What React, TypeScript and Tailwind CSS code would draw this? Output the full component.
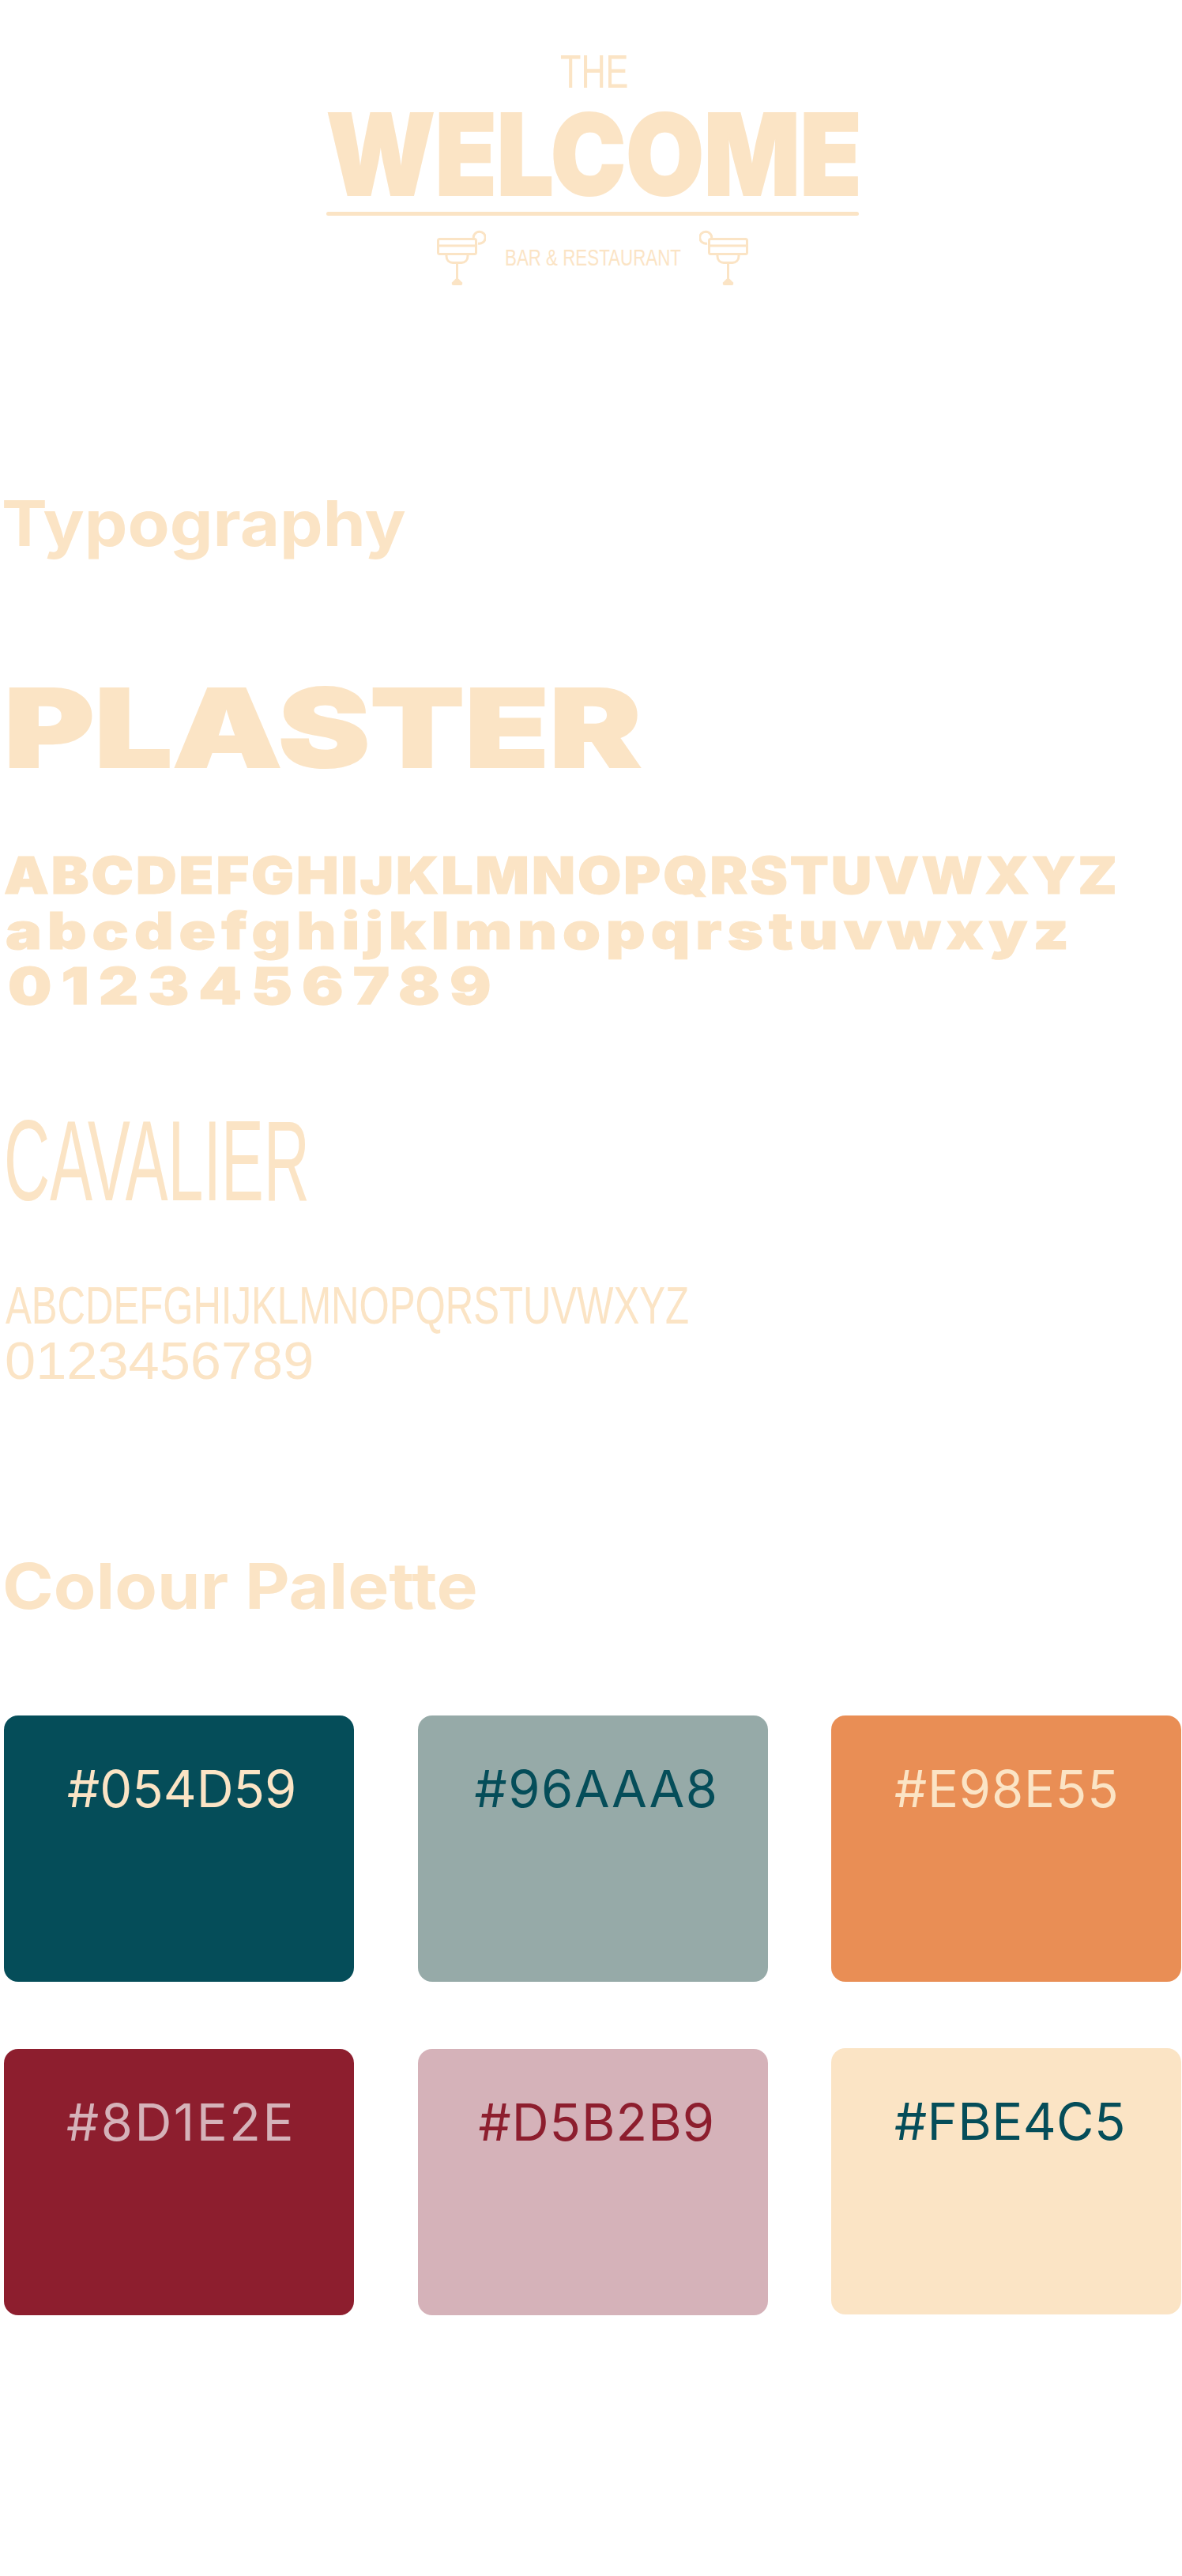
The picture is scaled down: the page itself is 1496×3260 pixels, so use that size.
const swatches = [
  { hex: "#054D59", box: "bg-[#054D59] text-[#FBE4C5] pl-[80px]", type: "tracking-[0px]" },
  { hex: "#96AAA8", box: "bg-[#96AAA8] text-[#054D59] pl-[72px]", type: "tracking-[1.5px]" },
  { hex: "#E98E55", box: "bg-[#E98E55] text-[#FBE4C5] pl-[80px]", type: "tracking-[0.8px]" },
  { hex: "#8D1E2E", box: "bg-[#8D1E2E] text-[#D5B2B9] pl-[79px]", type: "tracking-[2.5px]" },
  { hex: "#D5B2B9", box: "bg-[#D5B2B9] text-[#8D1E2E] pl-[77px]", type: "tracking-[1px]" },
  { hex: "#FBE4C5", box: "bg-[#FBE4C5] text-[#054D59] pl-[80px] -mt-px", type: "tracking-[0.4px]" },
];

const Cocktail = ({ className = "" }: { className?: string }) => (
  <svg
    width={62}
    height={70}
    viewBox="0 0 62 70"
    fill="none"
    stroke="#FBE4C5"
    strokeWidth={3}
    className={className}
  >
    <rect x={1.5} y={11.5} width={48} height={19} rx={2} />
    <path d="M1.5 20H49.5" />
    <path d="M46.4 11A7.5 7.5 0 1 1 52 17" />
    <path d="M12 31V33C12 38.5 15.5 41.5 20 41.5H31C35.5 41.5 39 38.5 39 33V31" />
    <path d="M25.5 43V62" />
    <path d="M25.5 60L19 66.5Q18 70 21 70H30Q33 70 32 66.5Z" fill="#FBE4C5" stroke="none" />
  </svg>
);

const App = () => (
  <div className="flex h-[3260px] w-[1496px] flex-col overflow-hidden bg-white text-[#FBE4C5] font-['Inter',sans-serif]">
    {/* Logo */}
    <div className="ml-[709px] mt-[69px] h-[43px] whitespace-nowrap text-[60px] leading-[43px] font-['Liberation_Sans',sans-serif]">
      <span className="inline-block origin-left scale-x-[0.72]">THE</span>
    </div>
    <div className="ml-[413px] mt-[31px] h-[104px] whitespace-nowrap text-[143px] font-black leading-[104px] [-webkit-text-stroke:2px_#FBE4C5]">
      <span className="inline-block origin-left scale-x-[0.89]">WELCOME</span>
    </div>
    <div className="ml-[413px] mt-[21px] h-[5px] w-[674px] rounded-full bg-[#FBE4C5]" />
    <div className="ml-[553px] mt-[18px] flex h-[70px] items-start">
      <Cocktail />
      <div className="ml-[24px] mt-[25px] h-[21px] w-[221px] whitespace-nowrap text-[29px] leading-[21px] font-['Liberation_Sans',sans-serif]">
        <span className="inline-block origin-left scale-x-[0.77]">BAR &amp; RESTAURANT</span>
      </div>
      <Cocktail className="ml-[25px] -scale-x-100" />
    </div>

    {/* Typography */}
    <h2 className="ml-[2px] mt-[272px] h-[58px] whitespace-nowrap text-[80px] font-bold leading-[58px]">
      <span className="inline-block origin-left scale-x-[1.085]">Typography</span>
    </h2>
    <div className="ml-[5px] mt-[180px] h-[100px] whitespace-nowrap text-[138px] font-black leading-[100px] [-webkit-text-stroke:2px_#FBE4C5]">
      <span className="inline-block origin-left scale-x-[1.265]">PLASTER</span>
    </div>
    <div className="ml-[5px] mt-[113px] h-[47px] whitespace-nowrap text-[65px] font-black leading-[47px] tracking-[2.7px] [-webkit-text-stroke:1px_#FBE4C5]">
      <span className="inline-block origin-left scale-x-[1.1]">ABCDEFGHIJKLMNOPQRSTUVWXYZ</span>
    </div>
    <div className="ml-[7px] mt-[23px] h-[47px] whitespace-nowrap text-[64px] font-black leading-[47px] tracking-[5.9px] [-webkit-text-stroke:1px_#FBE4C5]">
      <span className="inline-block origin-left scale-x-[1.2]">abcdefghijklmnopqrstuvwxyz</span>
    </div>
    <div className="ml-[10px] mt-[23px] h-[47px] whitespace-nowrap text-[65px] font-black leading-[47px] tracking-[10px] [-webkit-text-stroke:1px_#FBE4C5]">
      <span className="inline-block origin-left scale-x-[1.2]">0123456789</span>
    </div>
    <div className="ml-[5px] mt-[147px] h-[103px] whitespace-nowrap text-[144px] leading-[103px] font-['Liberation_Sans',sans-serif]">
      <span className="inline-block origin-left scale-x-[0.56]">CAVALIER</span>
    </div>
    <div className="ml-[7px] mt-[107px] h-[48px] whitespace-nowrap text-[67px] leading-[48px] font-['Liberation_Sans',sans-serif]">
      <span className="inline-block origin-left scale-x-[0.733]">ABCDEFGHIJKLMNOPQRSTUVWXYZ</span>
    </div>
    <div className="ml-[6px] mt-[22px] h-[48px] whitespace-nowrap text-[67px] leading-[48px] font-['Liberation_Sans',sans-serif]">
      <span className="inline-block origin-left scale-x-[1.05]">0123456789</span>
    </div>

    {/* Colour palette */}
    <h2 className="ml-[3px] mt-[231px] h-[59px] whitespace-nowrap text-[80px] font-bold leading-[59px]">
      <span className="inline-block origin-left scale-x-[1.095]">Colour Palette</span>
    </h2>
    <div className="ml-[5px] mt-[135px] grid grid-cols-[443px_443px_443px] gap-x-[80.5px] gap-y-[85px]">
      {swatches.map((swatch) => (
        <div key={swatch.hex} className={"h-[337px] rounded-[18px] pt-[69px] " + swatch.box}>
          <p className={"whitespace-nowrap text-[65px] font-normal leading-[47px] " + swatch.type}>{swatch.hex}</p>
        </div>
      ))}
    </div>
  </div>
);

export default App;
